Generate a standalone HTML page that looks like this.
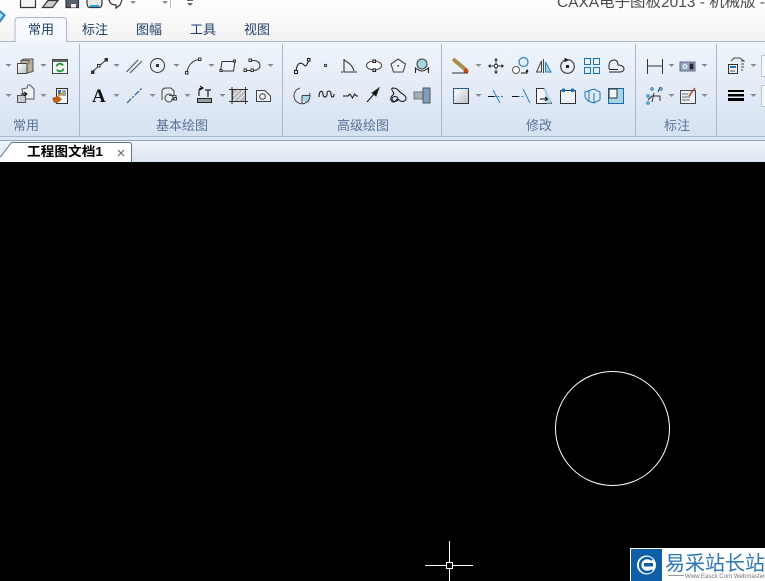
<!DOCTYPE html>
<html><head><meta charset="utf-8">
<style>
html,body{margin:0;padding:0;background:#000;width:765px;height:581px;overflow:hidden}
svg{display:block}
text{font-family:"Liberation Sans","Noto Sans CJK SC",sans-serif}
</style></head><body>
<svg width="765" height="581" viewBox="0 0 765 581" xmlns="http://www.w3.org/2000/svg">
<defs>
<linearGradient id="top" x1="0" y1="0" x2="0" y2="1"><stop offset="0" stop-color="#ffffff"/><stop offset="1" stop-color="#f2f2f2"/></linearGradient>
<linearGradient id="rib" x1="0" y1="0" x2="0" y2="1"><stop offset="0" stop-color="#f0f5fc"/><stop offset="1" stop-color="#d6e2f1"/></linearGradient>
<linearGradient id="bar" x1="0" y1="0" x2="0" y2="1"><stop offset="0" stop-color="#eff4fa"/><stop offset="1" stop-color="#dbe5f1"/></linearGradient>
<linearGradient id="sh" x1="0" y1="0" x2="1" y2="1"><stop offset="0" stop-color="#fff"/><stop offset="1" stop-color="#b9c0c8"/></linearGradient>
<path id="a" d="M0.500 0h6l-3 3z" fill="#858a91"/>
</defs>

<rect width="765" height="41" fill="url(#top)"/>
<rect y="41" width="765" height="95" fill="url(#rib)"/>
<rect y="41" width="765" height="1" fill="#a9b8cd"/>
<rect y="136" width="765" height="4" fill="#dde7f3"/>
<rect y="136" width="765" height="1" fill="#a7b7cc"/>
<rect y="140" width="765" height="1" fill="#8fa4c0"/>
<rect y="141" width="765" height="21" fill="url(#bar)"/>
<rect y="162" width="765" height="419" fill="#000"/>

<!-- group separators -->
<g fill="#a9b8cc">
<rect x="79" y="44" width="1" height="92"/><rect x="282" y="44" width="1" height="92"/><rect x="441" y="44" width="1" height="92"/><rect x="635" y="44" width="1" height="92"/><rect x="716" y="44" width="1" height="92"/>
</g>

<!-- app logo + qat -->
<path d="M0 10 L6 15 L0 23Z" fill="#2b8fd0"/><path d="M0 13 L3 15 L0 19Z" fill="#bfe3f7"/>
<g fill="none" stroke="#333" stroke-width="1.200">
<path d="M20.500 0V7.500H35.500V0" fill="#f5f5f5"/>
<path d="M42.500 7.500L48 0.500H58L52.500 7.500Z" fill="#c9ced3"/>
<path d="M66 0V7.500H78.500V0" fill="#55606c"/>
<path d="M87 0V3C87 6 88 7.500 90 7.500H99C101 7.500 102 6 102 3V0" fill="#e8e8e8"/>
<path d="M109 0C110 4 113 5 116 5V8L120 5L122 0" fill="#fff"/>
</g>
<rect x="71" y="4" width="5" height="3.500" fill="#eee"/>
<rect x="90" y="5" width="9" height="2" fill="#2aa3d8"/>
<path d="M130 1h6l-3 3z" fill="#8b8b8b"/><path d="M162 1h6l-3 3z" fill="#8b8b8b"/>
<rect x="170" y="0" width="1" height="8" fill="#bbb"/>
<path d="M187 0h6v1h-6zM187 3h6l-3 3z" fill="#666"/>

<text x="557" y="7" font-size="14.500" fill="#4a4a4a" textLength="208" lengthAdjust="spacingAndGlyphs">CAXA电子图板2013 - 机械版 -</text>

<!-- ribbon tabs -->
<path d="M15 41.500V21C15 18.500 16.500 17.500 19 17.500H62C64.500 17.500 66.500 18.500 66.500 21V41.500" fill="#f6f9fd" stroke="#a9b8cd"/>
<rect x="16" y="40" width="50" height="3" fill="#f1f6fc"/>
<g font-size="13" fill="#22416a">
<text x="28" y="34">常用</text>
<text x="82" y="34">标注</text>
<text x="136" y="34">图幅</text>
<text x="190" y="34">工具</text>
<text x="244" y="34">视图</text>
</g>

<!-- group labels -->
<g font-size="13" fill="#5b7196">
<text x="13" y="130">常用</text>
<text x="156" y="130">基本绘图</text>
<text x="337" y="130">高级绘图</text>
<text x="526" y="130">修改</text>
<text x="664" y="130">标注</text>
</g>

<!-- dropdown arrows -->
<g>
<use href="#a" x="5" y="64"/><use href="#a" x="40" y="64"/><use href="#a" x="113" y="64"/><use href="#a" x="173" y="64"/><use href="#a" x="208" y="64"/><use href="#a" x="267" y="64"/>
<use href="#a" x="5" y="94"/><use href="#a" x="40" y="94"/><use href="#a" x="113" y="94"/><use href="#a" x="149" y="94"/><use href="#a" x="184" y="94"/><use href="#a" x="219" y="94"/>
<use href="#a" x="475" y="64"/><use href="#a" x="475" y="94"/>
<use href="#a" x="668" y="64"/><use href="#a" x="701" y="64"/><use href="#a" x="668" y="94"/><use href="#a" x="701" y="94"/>
<use href="#a" x="750" y="64"/><use href="#a" x="750" y="94"/>
</g>

<!-- Common group -->
<path d="M21 60.500L24 59H33V71.500L27 73H21Z" fill="#b8b09c" stroke="#555"/>
<rect x="17.500" y="63.500" width="9.500" height="10" fill="url(#sh)" stroke="#444"/>
<path d="M21 60.500h8v3" fill="none" stroke="#555"/>
<rect x="52.500" y="59.500" width="15" height="14" fill="#f4f4f4" stroke="#444"/><rect x="53" y="60" width="14" height="2" fill="#666"/>
<path d="M56.500 66.500A3.500 3.500 0 0 1 63 65.500M63.500 68.500A3.500 3.500 0 0 1 57 69.500" fill="none" stroke="#1f9c2b" stroke-width="1.800"/>
<path d="M22 89l5 -1 1-3h2l4 4v10H24z" fill="#eef1f4" stroke="#555"/>
<rect x="17.500" y="95.500" width="8" height="7" fill="#c8ccd0" stroke="#555"/><path d="M21 94h5M24 92l3 2-3 2" fill="none" stroke="#000"/>
<rect x="56.500" y="88.500" width="11" height="15" fill="#f4f6f8" stroke="#333"/><rect x="58" y="90" width="3" height="6" fill="#3a71b5"/><rect x="62" y="90" width="4" height="6" fill="#88a9cf"/>
<path d="M52 98l6-2 4 3-3 3-5 1z" fill="#b8621c"/><path d="M58 96l7-4" stroke="#d89a3a" stroke-width="2"/>

<!-- Basic draw row 1 -->
<g fill="none" stroke="#333" stroke-width="1">
<path d="M92 72L106 60"/><rect x="91.500" y="71" width="2.500" height="2.500" fill="#333"/><rect x="97.500" y="64.500" width="2.500" height="2.500" fill="#fff"/><rect x="105" y="58.500" width="2.500" height="2.500" fill="#333"/>
<path d="M126.500 72L138 60M130 73L142 61" stroke="#555" stroke-width="1.100"/>
<circle cx="157.500" cy="65.500" r="7"/><rect x="156.500" y="64.500" width="2" height="2" fill="#333"/>
<path d="M187 72C188 65 193 60 199 59.500"/><rect x="185.500" y="71.500" width="2.500" height="2.500" fill="#fff"/><rect x="198.500" y="58" width="2.500" height="2.500" fill="#fff"/>
<path d="M222 61.500h13l-1.500 9.500h-13z" fill="#eef2f7"/><rect x="220" y="69.500" width="2" height="2" fill="#fff"/><rect x="233.500" y="60" width="2" height="2" fill="#fff"/>
<path d="M245 70.500H253C258 70.500 260 68 260 65.500S258 60.500 253 60.500H250"/><rect x="244" y="69" width="2.500" height="2.500" fill="#fff"/><rect x="251" y="69" width="2.500" height="2.500" fill="#fff"/><rect x="249" y="59" width="2.500" height="2.500" fill="#fff"/>
</g>
<!-- row 2 -->
<text x="92" y="102" font-size="19" font-weight="bold" fill="#111" style="font-family:'Liberation Serif',serif">A</text>
<path d="M127 103L142 88" stroke="#1e5f9e" stroke-width="1.200" stroke-dasharray="6 1.500 2 1.500"/>
<g fill="none" stroke="#444">
<path d="M162 100V92C162 89 164 88 166 88H171L174 91V96"/><circle cx="169" cy="98" r="4" fill="#e6ebf1"/><path d="M169 95.500h7v4h-5"/>
<rect x="174" y="97.500" width="2.500" height="2.500" fill="#fff" stroke="#333"/>
<rect x="197.500" y="98.500" width="14" height="4" fill="#9a9ea5" stroke="#222"/>
<path d="M199 96v-5c0-2 1-3 3-3M200 86l3 2-3 2" stroke="#000"/>
<path d="M205 90h6M208 90v7" stroke="#444" stroke-width="1.500"/>
<rect x="232.500" y="89.500" width="13" height="12" fill="#b6b9be" stroke="#333"/>
<path d="M233 101l12-12M233 96l7-7M238 101l7-7" stroke="#f0f0f0"/>
<path d="M232 87v17M245.500 87v17M229 89.500h19M229 101.500h19" stroke="#333"/>
<path d="M256.500 90.500H265L270.500 96V101.500H256.500Z" fill="#eef2f7"/><circle cx="262.500" cy="96.500" r="2.800"/>
</g>

<!-- Advanced draw row 1 -->
<g fill="none" stroke="#222" stroke-width="1.100">
<path d="M296 71C297 62 301 62 304 65S307 63 309 60"/><rect x="294.500" y="70.500" width="3" height="3" fill="#fff"/><rect x="307.500" y="58.500" width="2.500" height="2.500" fill="#fff"/>
<rect x="324.500" y="64.500" width="2" height="2" stroke="#444" fill="#fff"/>
<path d="M344 59V72H357M341 72h2M344 60C347 62 352 64 354 71" stroke="#333"/>
<ellipse cx="374" cy="65.500" rx="7.500" ry="4.500" fill="#fff" stroke="#444"/><rect x="373" y="60" width="2.500" height="2.500" fill="#fff"/><rect x="373" y="69" width="2.500" height="2.500" fill="#fff"/>
<path d="M398 59L405.500 64L403 72H393.500L391 64Z" fill="#eef2f7" stroke="#444"/><rect x="397.500" y="65" width="1.500" height="1.500" fill="#222" stroke="none"/>
<circle cx="422" cy="64" r="5" fill="#a9d3e6" stroke="#444"/><path d="M415.500 73V68C418 70 420 71 422 71S426 70 428.500 68V73" stroke="#222"/>
</g>
<!-- row 2 -->
<g fill="none" stroke="#333" stroke-width="1">
<path d="M302 95.500h7.500V103.500A8 8 0 0 1 302 95.500Z" fill="#a9d3e6" stroke="none"/>
<path d="M300 88A8 8 0 1 0 309.500 93M302 95.500V103M302 95.500H309.500" stroke="#444"/>
<path d="M319 97C319 90 323 90 323 94C323 98 327 98 327 94C327 90 331 90 331 94S334 98 334 94" stroke-width="1.100" stroke="#111"/>
<path d="M343 96h5l2-2 2.500 4 2-4 2 2h1.500" stroke="#111"/>
<path d="M367 102L375 93" stroke="#111"/><path d="M372 93L379 88L376 96Z" fill="#111"/>
<path d="M393 88C397 88 398 90 400 92S406 95 406 98 402 103 399 100 396 103 393 102 390 97 393 95 389 89 393 88Z" stroke="#111"/><ellipse cx="395" cy="99" rx="3" ry="2.500" stroke="#111"/>
<rect x="414" y="92" width="9" height="7" fill="#a5adb7" stroke="#777"/><rect x="423" y="88" width="7" height="15" fill="#7f9fbf" stroke="#555"/>
</g>

<!-- Modify row 1 -->
<path d="M453 59L466 70" stroke="#a98d4b" stroke-width="4"/><circle cx="466" cy="71" r="2.500" fill="#c8501a"/><path d="M452 73h16" stroke="#333"/>
<g fill="none" stroke="#222">
<path d="M490 66h12M496 60v12" stroke="#444"/><circle cx="496" cy="66" r="1.800" fill="#fff"/>
<path d="M494 60.500L496 58L498 60.500ZM494 71.500L496 74L498 71.500ZM490.500 64L488 66L490.500 68ZM501.500 64L504 66L501.500 68Z" fill="#222" stroke="none"/>
<circle cx="516" cy="70" r="3.500" fill="#fff" stroke="#555"/><circle cx="523.500" cy="62" r="4.500" stroke="#2a80c4" stroke-width="1.200"/>
<path d="M521 73h6v-3M526 72l1 -2 1 2" stroke="#111"/>
<path d="M543.500 59v14M536.500 72L541.500 61V72Z" stroke="#444"/>
<path d="M545.500 62L551 72H545.500Z" fill="#a9d3e6" stroke="#2a80c4"/>
<circle cx="567.500" cy="66.500" r="6.800" stroke="#444" stroke-width="1.200"/><rect x="566.500" y="65.500" width="2" height="2" fill="#111"/><path d="M565 58.500l3 1.500-3 1.500z" fill="#111"/>
<g stroke="#1874bc"><rect x="584.500" y="58.500" width="6" height="6"/><rect x="593.500" y="58.500" width="6" height="6"/></g>
<g stroke="#1874bc"><rect x="584.500" y="67.500" width="6" height="6"/><rect x="593.500" y="67.500" width="6" height="6"/></g>
<path d="M609 69V66C609 62 611 60 614 60S618 62 618 65C622 65 624 67 624 69S622 72 620 72H609M609 69.500h9M609 72h9" stroke="#222"/>
</g>
<!-- row 2 -->
<rect x="453.500" y="88.500" width="15" height="15" fill="url(#sh)" stroke="#333"/>
<path d="M453.500 103.500V88.500H468.500" fill="none" stroke="#1c7fd0" stroke-dasharray="2.500 1.500"/>
<g fill="none">
<path d="M488 96.500h6" stroke="#111"/><path d="M494 96.500h9" stroke="#2a80c4" stroke-dasharray="2 1.500"/><path d="M493 90L500 103" stroke="#2a80c4"/>
<path d="M512 96.500h6" stroke="#111"/><path d="M518 96.500h6" stroke="#2a80c4" stroke-dasharray="2 1.500"/><path d="M523 89L530 103" stroke="#2a80c4"/>
<path d="M536.500 88.500H544L551.500 103.500H536.500Z" fill="#f3f6fa" stroke="#333"/><path d="M544 88.500H546L551.500 103.500H547Z" fill="#a9d3e6"/><path d="M540 99h7M545 97l2.500 2-2.500 2" stroke="#000"/>
<rect x="560.500" y="90.500" width="15" height="13" fill="#eef2f7" stroke="#333"/><rect x="562" y="88.500" width="3" height="3.500" fill="#1874bc"/><rect x="571" y="88.500" width="3" height="3.500" fill="#1874bc"/>
<path d="M585 92L594 89L600 92V100L594 103L588 101L585 97Z M589 91V101M594 93V103" stroke="#1874bc"/>
<rect x="608.500" y="88.500" width="15" height="15" fill="#a9d3e6" stroke="#1b6aa8"/><rect x="609" y="89" width="8" height="9" fill="#f3f6fa" stroke="#333"/>
</g>

<!-- Dimension -->
<g fill="none" stroke="#333">
<path d="M647.500 59v15M662.500 59v15M648 66h14"/>
<rect x="680" y="62" width="15" height="9" fill="#93aac9" stroke="#667"/>
<circle cx="685" cy="66.500" r="1.800" stroke="#fff"/><rect x="690" y="64" width="3" height="5" fill="#223"/>
<path d="M648 100l4-4h8v5M654 93l-2 9M658 92l2-5" stroke="#333"/>
<g stroke="#1874bc"><circle cx="648" cy="103" r="1.200"/><circle cx="648" cy="96" r="1.200"/><circle cx="652" cy="89" r="1.200"/><circle cx="661" cy="89" r="1.200"/></g>
<rect x="680.500" y="90.500" width="15" height="13" fill="#eef2f7" stroke="#445"/>
<path d="M682 94h6M682 97h8M682 100h8" stroke="#666"/><path d="M689 96L695 88" stroke="#a7532a" stroke-width="1.500"/>
</g>

<!-- Far right group -->
<g fill="none" stroke="#333">
<path d="M731 61l3-3h6l4 3h-3M741 61h3M741 64h3M741 67h3M741 70h2" stroke="#444"/>
<rect x="728.500" y="64.500" width="9" height="9" fill="#eef2f7"/><rect x="730" y="66" width="6" height="2" fill="#2a6fb0" stroke="none"/>
<path d="M730 71h5" stroke="#555"/>
</g>
<rect x="728" y="90" width="16" height="2" fill="#000"/><rect x="728" y="94" width="16" height="2.500" fill="#000"/><rect x="728" y="98" width="16" height="3" fill="#000"/>
<rect x="761.500" y="55.500" width="6" height="21" fill="#f4f7fb" stroke="#b9c6d6"/>
<rect x="761.500" y="85.500" width="6" height="21" fill="#f4f7fb" stroke="#b9c6d6"/>

<!-- doc tab -->
<path d="M0 157.500L11.500 142.500H129C130.500 142.500 131.500 143.500 131.500 145V162H0Z" fill="#fff"/>
<path d="M0 157.500L11.500 142.500H129C130.500 142.500 131.500 143.500 131.500 145V162" fill="none" stroke="#5d7596"/>
<text x="27" y="156" font-size="13" font-weight="bold" fill="#000" textLength="76" lengthAdjust="spacingAndGlyphs">工程图文档1</text>
<path d="M118 150l6 6M124 150l-6 6" stroke="#666" stroke-width="1.100"/>

<!-- canvas -->
<circle cx="612.500" cy="428.500" r="57" fill="none" stroke="#fff" stroke-width="1"/>
<path d="M425 565.500H446M453 565.500H473M449.500 541V562M449.500 569V581" stroke="#fff"/>
<rect x="446.500" y="562.500" width="6" height="6" fill="none" stroke="#fff"/>

<!-- watermark -->
<rect x="630" y="548" width="135" height="33" fill="#fff"/>
<rect x="631" y="549" width="31" height="32" fill="#0f5ea8"/>
<circle cx="646.500" cy="565" r="9.500" fill="#fff"/>
<path d="M652 560A7 7 0 1 0 652 570" fill="none" stroke="#0f5ea8" stroke-width="2.500"/>
<path d="M644 563h9v3.500h-9z" fill="#0f5ea8"/>
<text x="665" y="570" font-size="20" fill="#2a74b8" textLength="100" lengthAdjust="spacing">易采站长站</text>
<path d="M668 575.500h16" stroke="#999"/>
<text x="685" y="578" font-size="6.500" fill="#777" textLength="80" lengthAdjust="spacingAndGlyphs">Www.Easck.Com  Webmaster</text>
</svg>
</body></html>
